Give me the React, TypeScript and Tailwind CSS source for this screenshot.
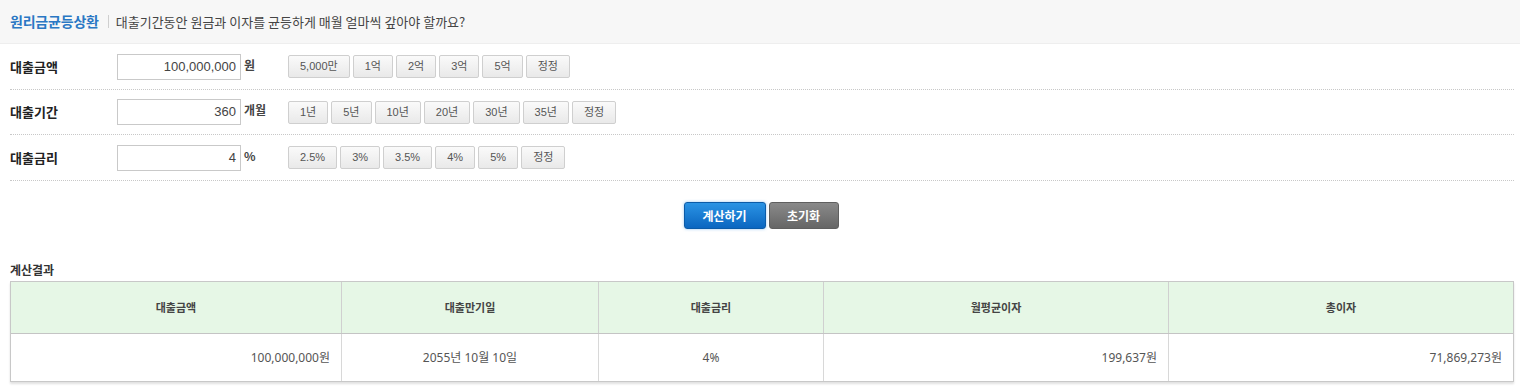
import React from 'react';

const kr = "font-['Noto_Sans_CJK_KR','Noto_Sans',sans-serif]";

type Row = { label: string; value: string; unit: string; presets: string[] };

const rows: Row[] = [
  { label: '대출금액', value: '100,000,000', unit: '원', presets: ['5,000만', '1억', '2억', '3억', '5억', '정정'] },
  { label: '대출기간', value: '360', unit: '개월', presets: ['1년', '5년', '10년', '20년', '30년', '35년', '정정'] },
  { label: '대출금리', value: '4', unit: '%', presets: ['2.5%', '3%', '3.5%', '4%', '5%', '정정'] },
];

const rowHeights = ['h-[46px]', 'h-[45px]', 'h-[46px]'];

const results = [
  { head: '대출금액', value: '100,000,000원', w: 'w-[330px]', align: 'text-right' },
  { head: '대출만기일', value: '2055년 10월 10일', w: 'w-[257px]', align: 'text-center' },
  { head: '대출금리', value: '4%', w: 'w-[225px]', align: 'text-center' },
  { head: '월평균이자', value: '199,637원', w: 'w-[345px]', align: 'text-right' },
  { head: '총이자', value: '71,869,273원', w: 'flex-1', align: 'text-right' },
];

function Preset({ children }: { children: React.ReactNode }) {
  return (
    <button className="h-[23px] min-w-[40px] px-[11px] rounded-[2px] border border-[#cfcfcf] bg-gradient-to-b from-[#fafafa] to-[#e9e9e9] text-[11px] text-[#555] font-['Liberation_Sans','Noto_Sans_CJK_KR',sans-serif] leading-none">
      {children}
    </button>
  );
}

export default function App() {
  return (
    <div className={`w-[1520px] h-[391px] bg-white text-[#333] ${kr}`}>
      {/* Title bar */}
      <div className="h-[44px] bg-[#f7f7f7] border-b border-[#eeeeee] flex items-center pl-[10px]">
        <span className="text-[14px] font-bold text-[#2a78c4] tracking-[-0.2px]">원리금균등상환</span>
        <span className="ml-[9px] mr-[7px] h-[13px] w-px bg-[#cfcfcf]" />
        <span className="text-[13px] text-[#444]">대출기간동안 원금과 이자를 균등하게 매월 얼마씩 갚아야 할까요?</span>
      </div>

      {/* Inputs */}
      <div className="px-[10px] pr-[6px]">
        {rows.map((r, idx) => (
          <div
            key={r.label}
            className={`${rowHeights[idx]} flex items-center border-b border-dotted border-[#c8c8c8]`}
          >
            <div className="w-[107px] text-[13px] font-bold text-[#222]">{r.label}</div>
            <div className="w-[124px] h-[26px] border border-[#c9c9c9] bg-white flex items-center justify-end pr-[4px] text-[13px] text-[#444] font-['Liberation_Sans',sans-serif]">
              {r.value}
            </div>
            <div className="w-[47px] pl-[3px] text-[12px] font-bold text-[#444] -mt-[4px]">{r.unit}</div>
            <div className="flex gap-[3px]">
              {r.presets.map((p, i) => (
                <Preset key={i}>{p}</Preset>
              ))}
            </div>
          </div>
        ))}
      </div>

      {/* Actions */}
      <div className="flex justify-center gap-[3px] mt-[21px] pl-[2px]">
        <button className="w-[82px] h-[27px] rounded-[3px] border border-[#0b5ba8] bg-gradient-to-b from-[#2a93e4] to-[#0a66c0] text-white text-[12px] font-bold shadow-[0_0_3px_rgba(40,140,230,0.5)]">
          계산하기
        </button>
        <button className="w-[70px] h-[27px] rounded-[3px] border border-[#5f5f5f] bg-gradient-to-b from-[#8a8a8a] to-[#666666] text-white text-[12px] font-bold">
          초기화
        </button>
      </div>

      {/* Result */}
      <div className="px-[10px] pr-[6px] mt-[32px]">
        <div className="text-[12px] font-bold text-[#333] leading-[17px] mb-[3px]">계산결과</div>
        <div className="border border-[#c8c8c8] shadow-[0_2px_2px_rgba(0,0,0,0.12)]">
          <div className="flex h-[52px] bg-[#e6f7e6] border-b border-[#c4c4c4]">
            {results.map((c, i) => (
              <div
                key={c.head}
                className={`${c.w} flex items-center justify-center text-[11px] font-bold text-[#444] ${i > 0 ? 'border-l border-[#d0d0d0]' : ''}`}
              >
                {c.head}
              </div>
            ))}
          </div>
          <div className="flex h-[47px] bg-white">
            {results.map((c, i) => (
              <div
                key={c.head}
                className={`${c.w} ${c.align} flex items-center ${c.align === 'text-right' ? 'justify-end pr-[11px]' : 'justify-center'} text-[12px] text-[#555] font-['Noto_Sans','Noto_Sans_CJK_KR',sans-serif] ${i > 0 ? 'border-l border-[#d8d8d8]' : ''}`}
              >
                {c.value}
              </div>
            ))}
          </div>
        </div>
      </div>
    </div>
  );
}
